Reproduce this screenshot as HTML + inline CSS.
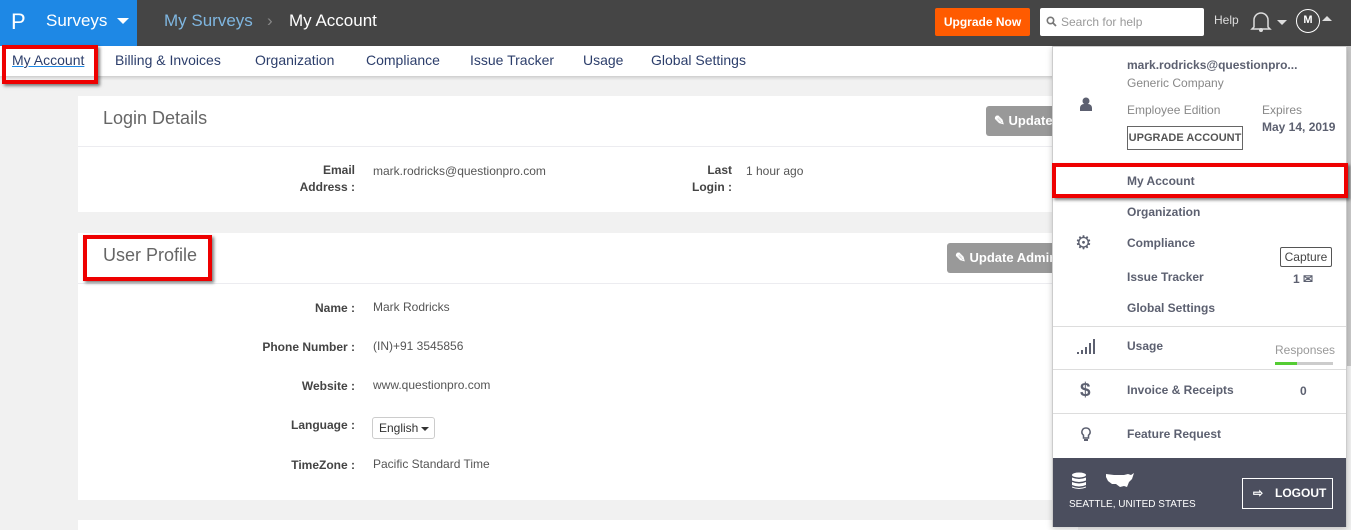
<!DOCTYPE html>
<html><head><meta charset="utf-8"><style>
*{box-sizing:border-box;margin:0;padding:0}
body{width:1351px;height:530px;overflow:hidden;background:#f1f1f1;font-family:"Liberation Sans",sans-serif;position:relative;color:#555}
.abs{position:absolute}
.top{left:0;top:0;width:1351px;height:46px;background:#454545}
.blue{left:0;top:0;width:137px;height:46px;background:#1e88e5;color:#fff}
.sub{left:0;top:46px;width:1351px;height:30px;background:#fff;box-shadow:0 2px 3px rgba(0,0,0,.15)}
.sub span{position:absolute;top:6px;font-size:14px;color:#2c3e6b}
.card{background:#fff;left:78px;width:1000px}
.lbl{font-size:12px;font-weight:bold;color:#444;text-align:right;width:120px;line-height:17px}
.val{font-size:12px;color:#555}
.red{border:4px solid #e00;box-shadow:2px 2px 3px rgba(0,0,0,.5)}
.btn{background:#999;color:#fff;font-size:13px;font-weight:bold;border-radius:3px;padding:0 8px;height:30px;line-height:30px}
.dd{left:1052px;top:46px;width:295px;height:481px;background:#fff;border:1px solid #ccc;box-shadow:0 2px 6px rgba(0,0,0,.2)}
.mi{position:absolute;left:74px;font-size:12px;font-weight:bold;color:#5c6070}
.hr{position:absolute;left:0;width:293px;height:1px;background:#ddd}
</style></head><body>
<div class="abs top"></div>
<div class="abs blue"><span class="abs" style="left:11px;top:9px;font-size:22px;font-weight:normal">P</span><span class="abs" style="left:46px;top:11px;font-size:17px">Surveys</span><span class="abs" style="left:117px;top:18px;border:6px solid transparent;border-top:6px solid #fff;border-bottom:0"></span></div>
<span class="abs" style="left:164px;top:11px;font-size:17px;color:#7fb6e0">My Surveys</span>
<span class="abs" style="left:267px;top:11px;font-size:17px;color:#888">›</span>
<span class="abs" style="left:289px;top:11px;font-size:17px;color:#fff">My Account</span>
<div class="abs" style="left:935px;top:8px;width:95px;height:28px;background:#ff5b00;border-radius:2px;color:#fff;font-size:12px;font-weight:bold;text-align:center;line-height:28px">Upgrade Now</div>
<div class="abs" style="left:1040px;top:8px;width:164px;height:28px;background:#fff;border-radius:2px;font-size:12px;color:#999;line-height:28px;padding-left:21px">Search for help<svg class="abs" style="left:6px;top:8px" width="11" height="11" viewBox="0 0 11 11"><circle cx="4.5" cy="4.5" r="3.2" stroke="#777" stroke-width="1.6" fill="none"/><path d="M7 7l3 3" stroke="#777" stroke-width="1.8"/></svg></div>
<span class="abs" style="left:1214px;top:13px;font-size:12px;color:#ddd">Help</span>
<svg class="abs" style="left:1250px;top:9px" width="22" height="24" viewBox="0 0 22 24"><path d="M4 18V11a7 7 0 0 1 14 0v7l2 2H2z" fill="none" stroke="#ddd" stroke-width="1.5"/><circle cx="11" cy="21" r="2" fill="#ddd"/></svg>
<span class="abs" style="left:1277px;top:20px;border:5px solid transparent;border-top:5px solid #ddd;border-bottom:0"></span>
<div class="abs" style="left:1296px;top:9px;width:24px;height:24px;border:1.5px solid #fff;border-radius:50%;color:#fff;font-size:11px;font-weight:bold;text-align:center;line-height:21px">M</div>
<span class="abs" style="left:1322px;top:16px;border:5px solid transparent;border-bottom:5px solid #ddd;border-top:0"></span>
<div class="abs sub"><span style="left:12px;text-decoration:underline;text-decoration-color:#1e88e5">My Account</span><span style="left:115px">Billing &amp; Invoices</span><span style="left:255px">Organization</span><span style="left:366px">Compliance</span><span style="left:470px">Issue Tracker</span><span style="left:583px">Usage</span><span style="left:651px">Global Settings</span></div>
<div class="abs red" style="left:2px;top:45px;width:96px;height:39px"></div>

<div class="abs card" style="top:96px;height:116px">
<div class="abs" style="left:25px;top:12px;font-size:18px;color:#666">Login Details</div>
<div class="abs" style="left:0;top:50px;width:1000px;height:1px;background:#ececf0"></div>
<div class="abs btn" style="left:908px;top:10px;width:80px">✎ Update</div>
<div class="abs lbl" style="left:157px;top:66px">Email<br>Address :</div>
<div class="abs val" style="left:295px;top:68px">mark.rodricks@questionpro.com</div>
<div class="abs lbl" style="left:534px;top:66px">Last<br>Login :</div>
<div class="abs val" style="left:668px;top:68px">1 hour ago</div>
</div>

<div class="abs card" style="top:233px;height:267px">
<div class="abs" style="left:25px;top:12px;font-size:18px;color:#666">User Profile</div>
<div class="abs" style="left:0;top:50px;width:1000px;height:1px;background:#ececf0"></div>
<div class="abs btn" style="left:869px;top:10px;width:120px">✎ Update Admin</div>
<div class="abs lbl" style="left:157px;top:67px">Name :</div><div class="abs val" style="left:295px;top:67px">Mark Rodricks</div>
<div class="abs lbl" style="left:157px;top:106px">Phone Number :</div><div class="abs val" style="left:295px;top:106px">(IN)+91 3545856</div>
<div class="abs lbl" style="left:157px;top:145px">Website :</div><div class="abs val" style="left:295px;top:145px">www.questionpro.com</div>
<div class="abs lbl" style="left:157px;top:184px">Language :</div>
<div class="abs" style="left:294px;top:184px;width:63px;height:22px;border:1px solid #ccc;border-radius:3px;font-size:12px;color:#333;line-height:20px;padding-left:6px">English<span class="abs" style="left:48px;top:9px;border:4px solid transparent;border-top:4px solid #333;border-bottom:0"></span></div>
<div class="abs lbl" style="left:157px;top:224px">TimeZone :</div><div class="abs val" style="left:295px;top:224px">Pacific Standard Time</div>
</div>
<div class="abs red" style="left:83px;top:235px;width:129px;height:46px"></div>
<div class="abs" style="left:78px;top:520px;width:1000px;height:10px;background:#fff"></div>
<div class="abs" style="left:1346px;top:46px;width:5px;height:320px;background:#c8c8c8"></div>

<div class="abs dd">
<div class="mi" style="top:11px">mark.rodricks@questionpro...</div>
<div class="mi" style="top:29px;font-weight:normal;color:#888">Generic Company</div>
<svg class="abs" style="left:27px;top:50px" width="12" height="14" viewBox="0 0 12 14"><circle cx="6" cy="4" r="3.5" fill="#5c6070"/><path d="M0 14v-3a4 4 0 0 1 4-4h4a4 4 0 0 1 4 4v3z" fill="#5c6070"/></svg>
<div class="mi" style="top:56px;font-weight:normal;color:#888">Employee Edition</div>
<div class="abs" style="left:74px;top:79px;width:116px;height:24px;border:1px solid #666;font-size:11px;font-weight:bold;color:#555;text-align:center;line-height:22px">UPGRADE ACCOUNT</div>
<div class="mi" style="left:209px;top:56px;font-weight:normal;color:#888">Expires</div>
<div class="mi" style="left:209px;top:73px">May 14, 2019</div>
<div class="mi" style="top:127px">My Account</div>
<div class="mi" style="top:158px">Organization</div>
<div class="mi" style="top:189px">Compliance</div>
<div class="mi" style="top:223px">Issue Tracker</div>
<div class="mi" style="top:254px">Global Settings</div>
<div class="abs" style="left:22px;top:185px;font-size:19px;color:#5c6070">⚙</div>
<div class="abs" style="left:227px;top:200px;width:52px;height:20px;border:1px solid #555;border-radius:2px;font-size:12px;color:#444;text-align:center;line-height:18px">Capture</div>
<div class="mi" style="left:240px;top:225px">1 ✉</div>
<div class="hr" style="top:279px"></div>
<svg class="abs" style="left:24px;top:292px" width="18" height="16"><rect x="0" y="13" width="2" height="2" fill="#5c6070"/><rect x="4" y="11" width="2" height="4" fill="#5c6070"/><rect x="8" y="8" width="2" height="7" fill="#5c6070"/><rect x="12" y="4" width="2" height="11" fill="#5c6070"/><rect x="16" y="0" width="2" height="15" fill="#5c6070"/></svg>
<div class="mi" style="top:292px">Usage</div>
<div class="abs" style="left:222px;top:296px;font-size:12px;color:#999">Responses</div>
<div class="abs" style="left:222px;top:315px;width:58px;height:3px;background:#ccc"><div style="width:22px;height:3px;background:#5c3"></div></div>
<div class="hr" style="top:322px"></div>
<div class="abs" style="left:27px;top:333px;font-size:19px;font-weight:bold;color:#5c6070">$</div>
<div class="mi" style="top:336px">Invoice &amp; Receipts</div>
<div class="mi" style="left:247px;top:337px">0</div>
<div class="hr" style="top:366px"></div>
<svg class="abs" style="left:28px;top:380px" width="10" height="15" viewBox="0 0 10 15"><path d="M5 1a4 4 0 0 0-2.5 7.2V11h5V8.2A4 4 0 0 0 5 1z" fill="none" stroke="#5c6070" stroke-width="1.5"/><rect x="3" y="12" width="4" height="2" fill="#5c6070"/></svg>
<div class="mi" style="top:380px">Feature Request</div>
<div class="abs" style="left:0;top:411px;width:293px;height:69px;background:#4b4e5e">
<svg class="abs" style="left:18px;top:14px" width="16" height="18" viewBox="0 0 16 18"><ellipse cx="8" cy="3" rx="7" ry="2.5" fill="#fff"/><path d="M1 5.5q7 3 14 0v3q-7 3-14 0zM1 10q7 3 14 0v3q-7 3-14 0zM1 14.5q7 3 14 0v1q-7 3-14 0z" fill="#fff"/></svg>
<svg class="abs" style="left:52px;top:14px" width="30" height="18" viewBox="0 0 30 18"><path d="M1 2l8 1 10 0 4-1 3 1 3-2-2 6-3 3-2 5-3-1-4 1-4-3-4 0-4-3-2-4z" fill="#fff"/></svg>
<div class="abs" style="left:16px;top:41px;font-size:10px;color:#fff">SEATTLE, UNITED STATES</div>
<div class="abs" style="left:189px;top:20px;width:91px;height:31px;border:1px solid #fff;color:#fff;font-size:12px;font-weight:bold;line-height:29px;padding-left:32px">LOGOUT<span class="abs" style="left:10px;top:0">⇨</span></div>
</div>
</div>
<div class="abs red" style="left:1052px;top:163px;width:296px;height:35px"></div>
</body></html>
